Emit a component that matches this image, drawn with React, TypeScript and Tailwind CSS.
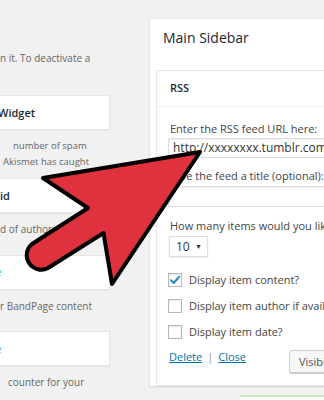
import React from "react"

function CheckRow({ label, checked }: { label: string; checked?: boolean }) {
    return (
        <div className="flex items-center gap-[7px] h-[16px]">
            <div className="w-[14px] h-[14px] border border-[#b4b9be] bg-white shadow-[inset_0_1px_2px_rgba(0,0,0,0.1)] flex items-center justify-center shrink-0">
                {checked &&
                    <svg width="12" height="12" viewBox="0 0 12 12">
                        <path d="M2 6.3 L4.8 9 L10 2.8" fill="none" stroke="#1e8cbe" strokeWidth="2" strokeLinecap="round" strokeLinejoin="round" />
                    </svg>
                }
            </div>
            <span className="text-[11px] text-[#444] whitespace-nowrap">{label}</span>
        </div>
    )
}

function LeftCard({ children }: { children: React.ReactNode }) {
    return (
        <div className="h-[35px] bg-white border border-l-0 border-[#e5e5e5] shadow-[0_1px_1px_rgba(0,0,0,0.04)] flex items-center overflow-hidden">
            {children}
        </div>
    )
}

function Arrow() {
    return (
        <svg className="absolute inset-0 pointer-events-none" width="324" height="400" viewBox="0 0 324 400">
            <path
                d="M200 152 L43 178 L88 208 L32 244 A14.5 14.5 0 0 0 48 268 L103.5 233 L112 284 Z"
                fill="#e0313f"
                stroke="#000"
                strokeWidth="4"
                strokeLinejoin="round"
            />
        </svg>
    )
}

export default function App() {
    return (
        <div
            className="relative w-[324px] h-[400px] overflow-hidden bg-[#f1f1f1] flex"
            style={{ fontFamily: "'Open Sans', 'Liberation Sans', sans-serif" }}
        >
            {/* available widgets, cut off on the left */}
            <div className="w-[110px] shrink-0 flex flex-col text-[10px] text-[#666] leading-[16px]">
                <div className="mt-[50px] whitespace-nowrap">n it. To deactivate a</div>

                <div className="mt-[29px]">
                    <LeftCard>
                        <span className="text-[11px] font-semibold text-[#23282d] ml-[-2px]">Widget</span>
                    </LeftCard>
                </div>
                <div className="mt-[8px] h-[32px] whitespace-nowrap text-[9.5px]">
                    <div className="pl-[13px]">number of spam</div>
                    <div className="pl-[3px]">Akismet has caught</div>
                </div>

                <div className="mt-[8px]">
                    <LeftCard>
                        <span className="text-[11px] font-semibold text-[#23282d]">id</span>
                    </LeftCard>
                </div>
                <div className="mt-[8px] h-[32px] whitespace-nowrap">
                    <div>d of authors</div>
                </div>

                <div className="mt-[8px]">
                    <LeftCard>
                        <span className="text-[11px] text-[#0073aa] ml-[-5px]">e</span>
                    </LeftCard>
                </div>
                <div className="mt-[8px] h-[32px] whitespace-nowrap">
                    <div>r BandPage content</div>
                </div>

                <div className="mt-[8px]">
                    <LeftCard>
                        <span className="text-[11px] text-[#0073aa] ml-[-5px]">e</span>
                    </LeftCard>
                </div>
                <div className="mt-[8px] h-[32px] whitespace-nowrap">
                    <div className="pl-[8px]">counter for your</div>
                </div>
            </div>

            {/* sidebar area */}
            <div className="ml-[39px] flex flex-col shrink-0 w-[200px]">
                <div className="mt-[18px] h-[370px] bg-white border border-r-0 border-[#e5e5e5] shadow-[0_1px_1px_rgba(0,0,0,0.04)] flex flex-col">
                    <h3 className="pl-[13px] mt-[9px] h-[20px] leading-[20px] text-[14px] text-[#23282d] whitespace-nowrap">
                        Main Sidebar
                    </h3>

                    <div className="ml-[6px] mt-[22px] h-[316px] border border-r-0 border-[#e5e5e5] shadow-[0_1px_1px_rgba(0,0,0,0.04)] flex flex-col">
                        <div className="h-[36px] border-b border-[#eee] flex items-center pl-[13px]">
                            <span className="text-[11px] font-semibold text-[#23282d]">RSS</span>
                        </div>

                        <div className="pl-[11px] flex flex-col text-[11px] leading-[16px] text-[#444]">
                            <div className="mt-[14px] pl-[2px] whitespace-nowrap">Enter the RSS feed URL here:</div>
                            <div className="mt-[1px] h-[20px] border border-r-0 border-[#ddd] shadow-[inset_0_1px_2px_rgba(0,0,0,0.07)] flex items-center pl-[4px] text-[12px] text-[#333] whitespace-nowrap overflow-hidden">
                                http://xxxxxxxx.tumblr.com/
                            </div>

                            <div className="mt-[10px] pl-[2px] whitespace-nowrap">Give the feed a title (optional):</div>
                            <div className="mt-[2px] h-[21px] border border-r-0 border-[#ddd] shadow-[inset_0_1px_2px_rgba(0,0,0,0.07)]" />

                            <div className="mt-[11px] pl-[2px] whitespace-nowrap">How many items would you like to display?</div>
                            <div className="mt-[2px] ml-[1px] w-[39px] h-[21px] border border-[#ddd] shadow-[0_1px_2px_rgba(0,0,0,0.07)] flex items-center justify-between pl-[6px] pr-[5px] text-[12px] text-[#333]">
                                <span>10</span>
                                <span className="text-[7px]">▼</span>
                            </div>

                            <div className="mt-[15px] flex flex-col gap-[10px]">
                                <CheckRow label="Display item content?" checked />
                                <CheckRow label="Display item author if available?" />
                                <CheckRow label="Display item date?" />
                            </div>

                            <div className="mt-[9px] flex items-start">
                                <div className="pl-[1px] flex gap-[5px] whitespace-nowrap">
                                    <span className="text-[#0073aa] underline">Delete</span>
                                    <span className="text-[#999]">|</span>
                                    <span className="text-[#0073aa] underline">Close</span>
                                </div>
                                <div className="ml-[43px] mt-[1px] h-[23px] px-[9px] border border-[#ccc] rounded-[3px] bg-[#f7f7f7] shadow-[0_1px_0_#ccc] flex items-center text-[11px] text-[#555] whitespace-nowrap">
                                    Visibility
                                </div>
                            </div>
                        </div>
                    </div>
                </div>

                <div className="mt-[8px] ml-[91px] h-[10px] bg-white border-t-2 border-[#c3e6bd]" />
            </div>

            <Arrow />
        </div>
    )
}
